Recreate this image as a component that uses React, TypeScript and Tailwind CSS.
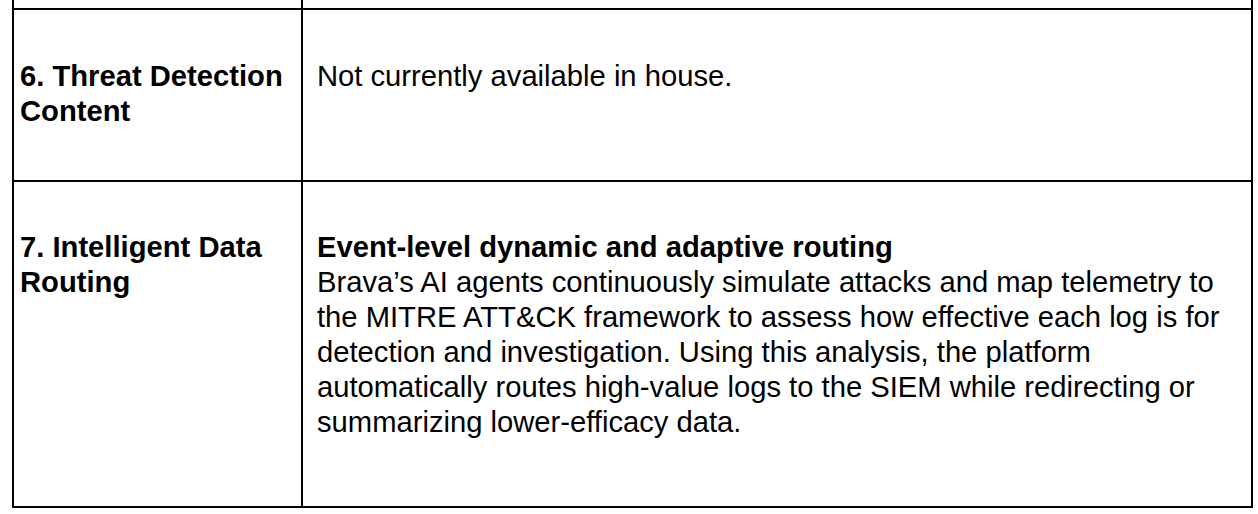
export default function App() {
  return (
    <div className="w-[1258px] h-[514px] bg-white pl-[12px] text-black font-['Liberation_Sans',Arial,Helvetica,sans-serif] text-[29.2px] leading-[35px] overflow-hidden">
      {/* tail of the row above, cut off by the viewport */}
      <div className="flex h-[8px]">
        <div className="w-[291px] border-l-2 border-r-2 border-black" />
        <div className="w-[950px] border-r-2 border-black" />
      </div>

      {/* 6. Threat Detection Content */}
      <div className="flex h-[172px] border-t-2 border-black w-[1241px]">
        <div className="w-[291px] shrink-0 border-l-2 border-r-2 border-black pl-[6px] pr-[4px] pt-[49px] font-bold">
          6. Threat Detection Content
        </div>
        <div className="w-[950px] shrink-0 border-r-2 border-black pl-[14px] pr-[12px] pt-[49px]">
          Not currently available in house.
        </div>
      </div>

      {/* 7. Intelligent Data Routing */}
      <div className="flex h-[328px] border-t-2 border-b-2 border-black w-[1241px]">
        <div className="w-[291px] shrink-0 border-l-2 border-r-2 border-black pl-[6px] pr-[4px] pt-[48px] font-bold">
          7. Intelligent Data Routing
        </div>
        <div className="w-[950px] shrink-0 border-r-2 border-black pl-[14px] pr-[12px] pt-[48px]">
          <p className="font-bold">Event-level dynamic and adaptive routing</p>
          <p>
            Brava’s AI agents continuously simulate attacks and map telemetry to the MITRE
            ATT&amp;CK framework to assess how effective each log is for detection and
            investigation. Using this analysis, the platform automatically routes high-value
            logs to the SIEM while redirecting or summarizing lower-efficacy data.
          </p>
        </div>
      </div>
    </div>
  );
}
